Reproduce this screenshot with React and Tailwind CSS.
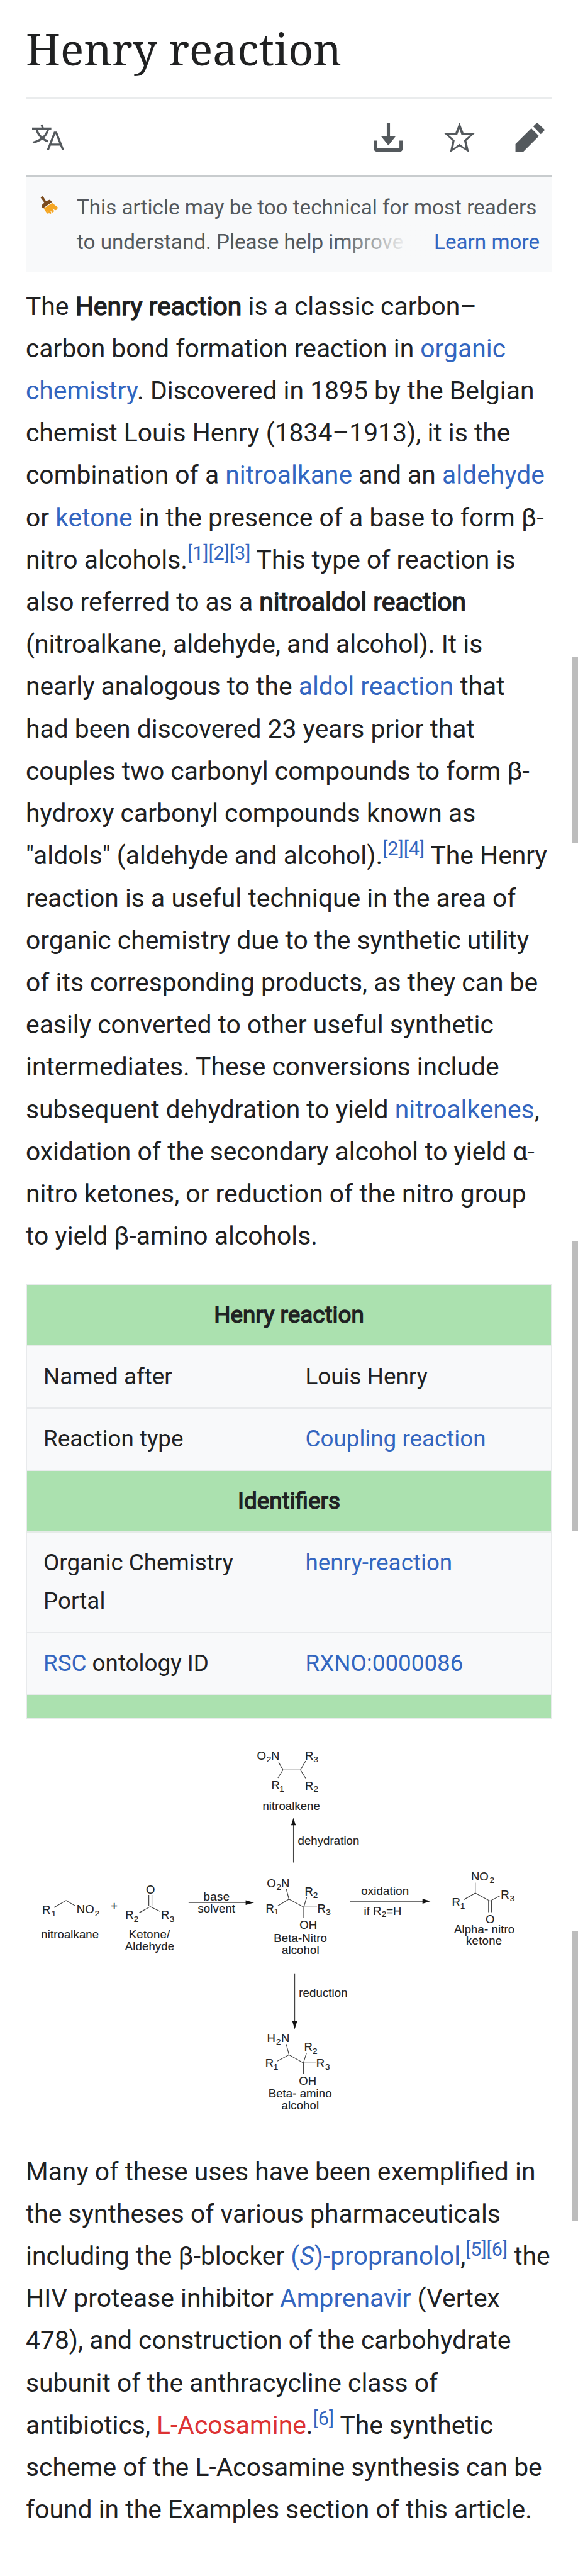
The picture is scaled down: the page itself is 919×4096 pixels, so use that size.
import React from "react";

const A = ({ children }) => <a className="text-[#3366c0]">{children}</a>;

const B = ({ children }) => (
  <b className="font-normal [-webkit-text-stroke:1.4px_#202122]">{children}</b>
);

const Ref = ({ children }) => (
  <sup className="relative -top-[14px] align-baseline text-[30.6px] leading-none text-[#3366c0]">{children}</sup>
);

/* ===================== TOOLBAR ===================== */
function LanguageIcon() {
  return (
    <svg viewBox="0 0 60 50" className="h-[42.5px] w-[51px]" fill="none" stroke="#54595d">
      <path d="M0 8.700H36M17.800 1.500L20 7.500M8.500 10C10 18 17 27.500 29.500 32.700M30 10C27 22 17 31 1.200 35" strokeWidth="3.900" />
      <path d="M29.500 49L42.300 16.500H45.200L58 49M34 38.700H53.500" strokeWidth="3.900" />
    </svg>
  );
}

function DownloadIcon() {
  return (
    <svg viewBox="0 0 60 60" className="size-[51px]" fill="none" stroke="#54595d">
      <path d="M30 3V30" strokeWidth="6" />
      <path d="M15.700 27H44.300L30 45Z" fill="#54595d" stroke="none" />
      <path d="M6 36V51Q6 53.700 8.700 53.700H51Q53.700 53.700 53.700 51V36" strokeWidth="6" />
    </svg>
  );
}

function StarIcon() {
  return (
    <svg viewBox="0 0 60 60" className="size-[51px]" fill="#54595d" fillRule="evenodd">
      <path d="M30 2L37.500 21.300H59.700L43 36.300L48 58L30 46.700L12.300 58L17 36.300L0.300 21.300H22.600ZM30 14L25.600 26H10.300L21 35.300L18.300 50.700L30 42L41.600 50.700L38.600 35.300L49.700 26H34Z" />
    </svg>
  );
}

function EditIcon() {
  return (
    <svg viewBox="0 0 60 60" className="size-[51px]" fill="#54595d">
      <path d="M3 42.300L32.700 13L47 27.300L17.700 56.700H3Z" />
      <path d="M36.300 9.300L42 3.500Q43.500 2.200 45 3.500L56.500 14.500Q58 16 56.700 17.500L50.300 23.700Z" />
    </svg>
  );
}

function Toolbar() {
  return (
    <div className="flex h-[125px] items-center justify-between border-b-[3px] border-[#c8ccce] px-[10px]">
      <LanguageIcon />
      <div className="flex items-center gap-[61.300px]">
        <DownloadIcon />
        <StarIcon />
        <EditIcon />
      </div>
    </div>
  );
}

/* ===================== NOTICE ===================== */
function BroomIcon() {
  return (
    <svg viewBox="0 0 34 34" className="mt-[9px] size-[29px]">
      <path d="M0.700 2.500Q2 0 5 0L10.700 9.200L17.700 6.500L21 9.500V11.500L5 22.500L2.300 19L3 16.500L7.700 12Z" fill="#7b4b1d" />
      <path d="M6.300 23L22.300 12.500L32.500 20.500L31.700 25L27.500 26.500L23 22L26 28L22.500 30.500L17.500 25.500L21 31.500L18.500 33.500L13.500 28L16 33.500L12.500 32Z" fill="#f5a623" />
    </svg>
  );
}

function Notice() {
  return (
    <div className="relative flex h-[150.500px] bg-[#f8f9fa] pl-[23px] pt-[21px] text-[33.200px] leading-[54.500px] text-[#54595d]">
      <BroomIcon />
      <p className="ml-[29px] whitespace-nowrap">
        This article may be too technical for most readers
        <br />
        to understand. Please help improve i
      </p>
      <div className="absolute right-0 top-[76px] flex h-[56px] w-[339px] justify-end bg-linear-to-r from-[#f8f9fa]/0 to-[#f8f9fa] to-33% pr-[20px]">
        <A>Learn more</A>
      </div>
    </div>
  );
}

/* ===================== INFOBOX ===================== */
function HeadRow({ children }) {
  return (
    <tr>
      <th colSpan={2} className="h-[98.700px] border-b-2 border-[#e6ebe8] bg-[#abe1af] text-center font-normal">
        <B>{children}</B>
      </th>
    </tr>
  );
}

function Row({ label, value }) {
  return (
    <tr className="border-b-2 border-[#e8eaec] align-top">
      <td className="w-1/2 px-[26px] py-[18px]">{label}</td>
      <td className="w-1/2 px-[26px] py-[18px]">{value}</td>
    </tr>
  );
}

function Infobox() {
  return (
    <table className="mt-[41px] w-full table-fixed border-collapse border-2 border-[#e8eaec] bg-[#f8f9fa] text-[36.800px] leading-[60.700px]">
      <tbody>
        <HeadRow>Henry reaction</HeadRow>
        <Row label="Named after" value="Louis Henry" />
        <Row label="Reaction type" value={<A>Coupling reaction</A>} />
        <HeadRow>Identifiers</HeadRow>
        <Row label="Organic Chemistry Portal" value={<A>henry-reaction</A>} />
        <Row label={<><A>RSC</A> ontology ID</>} value={<A>RXNO:0000086</A>} />
        <tr>
          <td colSpan={2} className="h-[39px] bg-[#abe1af]" />
        </tr>
      </tbody>
    </table>
  );
}

/* ===================== REACTION SCHEME ===================== */
// [x, baseline, text, width]
const LABELS = [
  [76.500, 401, "nitroalkane", 108],
  [207, 347.500, "+"],
  [240.500, 401, "Ketone/", 77],
  [233.500, 423, "Aldehyde", 92],
  [380, 330, "base", 49],
  [369.500, 352.500, "solvent", 70],
  [490.500, 161, "nitroalkene", 107.500],
  [556.500, 226, "dehydration", 115],
  [511.500, 407.500, "Beta-Nitro", 99.500],
  [526.500, 430, "alcohol", 70],
  [675, 319.500, "oxidation", 89],
  [848.500, 391, "Alpha- nitro", 113],
  [871, 412.300, "ketone", 67],
  [558.500, 510.400, "reduction", 91],
  [501.500, 698, "Beta- amino", 118.500],
  [526, 720.300, "alcohol", 70],
  [272.500, 317.600, "O"],
  [559.700, 383, "OH"],
  [907.500, 372, "O"],
  [558.600, 674.400, "OH"],
  // atoms that carry a subscript
  [78.500, 354.400, "R"],
  [143, 354, "NO"],
  [234, 364.500, "R"],
  [300.700, 364.500, "R"],
  [480, 67, "O"],
  [506.500, 67, "N"],
  [507, 122.400, "R"],
  [570, 67.400, "R"],
  [570, 123, "R"],
  [498.700, 305.600, "O"],
  [525.300, 305.600, "N"],
  [496.600, 352, "R"],
  [569.500, 320.500, "R"],
  [593, 353, "R"],
  [680, 357.300, "if R"],
  [722, 357.300, "=H"],
  [880.300, 292.700, "NO"],
  [844.500, 341, "R"],
  [936, 326.200, "R"],
  [498.800, 595, "H"],
  [525.300, 595, "N"],
  [495.600, 642, "R"],
  [568.300, 611.300, "R"],
  [591, 642, "R"],
];

const SUBS = [
  [96, 360, "1"], [177, 360, "2"], [250, 370, "2"], [317, 370, "3"],
  [498, 72, "2"], [522, 127, "1"], [586, 72, "3"], [586, 127, "2"],
  [516.500, 310, "2"], [512, 356, "1"], [585, 325.500, "2"], [609, 357, "3"],
  [713, 361, "2"], [915, 297.500, "2"], [860, 345, "1"], [953, 331, "3"],
  [516, 600, "2"], [511, 646, "1"], [584, 616.500, "2"], [607.500, 646.500, "3"],
];

const BONDS = [
  "M101 343L123.300 330L141.200 340.500",
  "M278 319.500V340M283.800 319.500V340M260 353L280.700 341.500L299 350.600",
  "M520.700 71.700L528.600 86.100L519.300 101M528.600 86.100H561.400M533 80.400H558M571 69.400L561.400 86.100L571 101.400",
  "M534.800 308.500L540 327.600L519.300 340M540 327.600L567.600 342.500L573 324.300M567.600 342.500H592.300M567.600 342.500V362",
  "M888.200 296.600V316.200L866.500 328.600M888.200 316.200L915.700 331L934.300 321.400M913 331V352M918.500 331V352",
  "M534.800 598.800L540 618.500L518.300 630.400M540 618.500L566.900 633.800L572.700 615.100M566.900 633.800H591M566.900 633.800V653.400",
  // reaction arrows
  "M352.300 334H460M548.300 259V188M654 331.500H790M550.700 466.400V556",
];

function Scheme() {
  return (
    <svg viewBox="48 0 984 750" className="mt-[7px] h-[638.200px] w-full" fontFamily="Liberation Sans, Arial, sans-serif">
      <g fill="none" stroke="#444" strokeWidth="1.400">
        {BONDS.map((d) => <path key={d} d={d} />)}
      </g>
      <path fill="#111" d="M474.600 334L459 329.500V338.500ZM548.300 175.500L544 189.500H552.600ZM804.500 331.500L789.500 327V336ZM550.700 570.600L546.200 555.800H555.200Z" />
      <g fill="#222" stroke="#222" strokeWidth="0.200" fontSize="21.800">
        {LABELS.map(([x, y, t, w], i) => (
          <text key={i} x={x} y={y} textLength={w}>{t}</text>
        ))}
      </g>
      <g fill="#222" stroke="#222" strokeWidth="0.200" fontSize="16">
        {SUBS.map(([x, y, t], i) => <text key={i} x={x} y={y}>{t}</text>)}
      </g>
    </svg>
  );
}

export default function App() {
  return (
    <div className="relative h-[4096px] w-[919px] overflow-hidden bg-white px-[41px] font-[Roboto,sans-serif] text-[40.850px] leading-[67.220px] text-[#202122]">
      <h1 className="h-[157px] border-b-[3px] border-[#eaeced] pt-[32px] font-['Noto_Serif','DejaVu_Serif',serif] text-[69.500px] leading-[90px]">
        Henry reaction
      </h1>
      <Toolbar />
      <Notice />

      <p className="mt-[21px]">
        The <B>Henry reaction</B> is a classic carbon–<br />carbon bond formation reaction in <A>organic chemistry</A>.
        Discovered in 1895 by the Belgian chemist Louis Henry (1834–1913), it is the combination of
        a <A>nitroalkane</A> and an <A>aldehyde</A> or <A>ketone</A> in the presence of a base to form β-<br />nitro
        alcohols.<Ref>[1][2][3]</Ref> This type of reaction is also referred to as a <B>nitroaldol reaction</B>{" "}
        (nitroalkane, aldehyde, and alcohol). It is nearly analogous to the <A>aldol reaction</A> that had been
        discovered 23 years prior that couples two carbonyl compounds to form β-<br />hydroxy carbonyl compounds known
        as "aldols" (aldehyde and alcohol).<Ref>[2][4]</Ref> The Henry reaction is a useful technique in the area of
        organic chemistry due to the synthetic utility of its corresponding products, as they can be easily converted
        to other useful synthetic intermediates. These conversions include subsequent dehydration to
        yield <A>nitroalkenes</A>, oxidation of the secondary alcohol to yield α-<br />nitro ketones, or reduction of
        the nitro group to yield β-amino alcohols.
      </p>

      <Infobox />
      <Scheme />

      <p className="mt-[40px]">
        Many of these uses have been exemplified in the syntheses of various pharmaceuticals including the
        β-blocker <A>(<i>S</i>)-propranolol</A>,<Ref>[5][6]</Ref> the HIV protease inhibitor <A>Amprenavir</A> (Vertex
        478), and construction of the carbohydrate subunit of the anthracycline class of
        antibiotics, <a className="text-[#d33]">L-Acosamine</a>.<Ref>[6]</Ref> The synthetic scheme of the L-Acosamine
        synthesis can be found in the Examples section of this article.
      </p>

      {/* scroll indicators */}
      <div className="absolute right-0 top-[1044px] h-[296px] w-[10px] bg-[#bdbdbd]" />
      <div className="absolute right-0 top-[1974px] h-[461px] w-[10px] bg-[#bdbdbd]" />
      <div className="absolute right-0 top-[3070px] h-[461px] w-[10px] bg-[#bdbdbd]" />
    </div>
  );
}
